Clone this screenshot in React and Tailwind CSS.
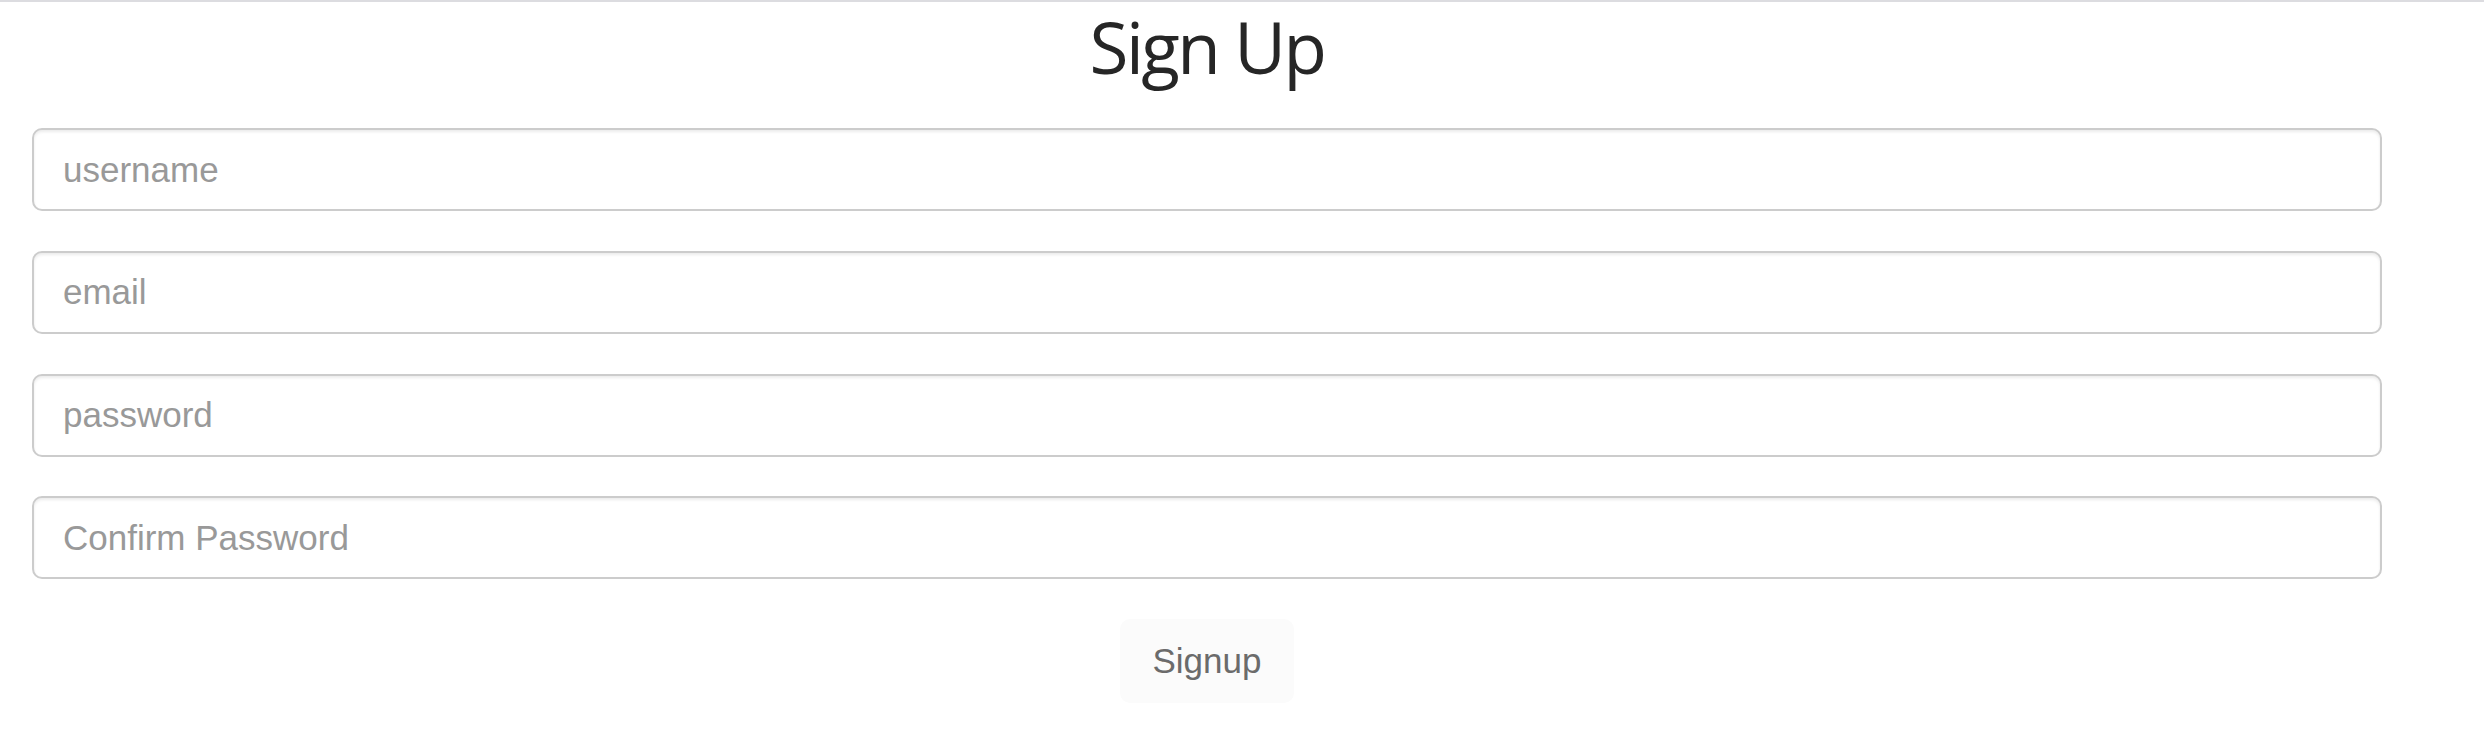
import { useState } from "react";

const fields = [
  { name: "username", type: "text", placeholder: "username" },
  { name: "email", type: "email", placeholder: "email" },
  { name: "password", type: "password", placeholder: "password" },
  { name: "confirm", type: "password", placeholder: "Confirm Password" },
];

const App = () => {
  const [form, setForm] = useState({ username: "", email: "", password: "", confirm: "" });

  const handleChange = (e) => setForm({ ...form, [e.target.name]: e.target.value });

  return (
    <div className="min-h-screen bg-white border-t-2 border-[#dcdce0]">
      <div className="w-[2414px] px-[32px] flex flex-col items-center">
        {/* Title */}
        <h1 className="mt-[2px] text-[71px] leading-[1.2] tracking-[-2.5px] text-[#262626] font-['Open_Sans',sans-serif]">
          Sign Up
        </h1>

        {/* Fields */}
        <form className="w-full mt-[39px] flex flex-col gap-[39.7px]" onSubmit={(e) => e.preventDefault()}>
          {fields.map((f) => (
            <input
              key={f.name}
              name={f.name}
              type={f.type}
              value={form[f.name]}
              onChange={handleChange}
              placeholder={f.placeholder}
              className="w-[2350px] h-[83px] pl-[29px] pr-[29px] bg-white border-2 border-[#cccccc] rounded-[10px] shadow-[inset_0_2px_3px_rgba(0,0,0,0.08)] text-[35px] text-[#555] placeholder:text-[#999] font-['Liberation_Sans',Arial,sans-serif] outline-none"
            />
          ))}

          {/* Submit */}
          <div className="flex justify-center">
            <button
              type="submit"
              className="w-[174px] h-[84px] rounded-[10px] bg-[#fbfbfb] text-[35px] text-[#6b6b6b] font-['Liberation_Sans',Arial,sans-serif]"
            >
              Signup
            </button>
          </div>
        </form>
      </div>
    </div>
  );
};

export default App;
